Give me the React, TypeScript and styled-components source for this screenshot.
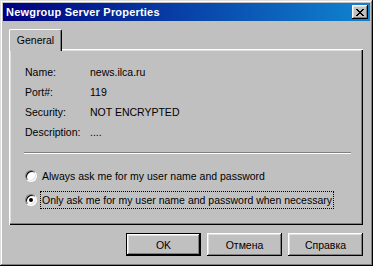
import React from "react";
import styled, { createGlobalStyle } from "styled-components";

const GlobalStyle = createGlobalStyle`
  html, body {
    margin: 0;
    padding: 0;
    background: #c0c0c0;
  }
  * {
    box-sizing: border-box;
  }
`;

const Window = styled.div`
  width: 373px;
  height: 266px;
  padding: 3px;
  display: flex;
  flex-direction: column;
  background: #c0c0c0;
  font-family: "Liberation Sans", Arial, sans-serif;
  font-size: 10.5px;
  color: #000;
  box-shadow: inset -1px -1px #000, inset 1px 1px #dfdfdf,
    inset -2px -2px #808080, inset 2px 2px #fff;
`;

const TitleBar = styled.div`
  height: 18px;
  display: flex;
  align-items: center;
  justify-content: space-between;
  padding: 0 2px 0 3px;
  background: linear-gradient(to right, #000080, #1084d0);
`;

const Title = styled.span`
  color: #fff;
  font-weight: bold;
  font-size: 11px;
  letter-spacing: 0.2px;
`;

const CloseButton = styled.button`
  width: 16px;
  height: 14px;
  padding: 0;
  border: none;
  background: #c0c0c0;
  display: flex;
  align-items: center;
  justify-content: center;
  box-shadow: inset -1px -1px #000, inset 1px 1px #fff,
    inset -2px -2px #808080, inset 2px 2px #dfdfdf;
`;

const Body = styled.div`
  flex: 1;
  display: flex;
  flex-direction: column;
  padding: 8px 7px 0 6px;
`;

const TabStrip = styled.div`
  display: flex;
  height: 20px;
`;

const Tab = styled.div<{ $active?: boolean }>`
  position: relative;
  z-index: 1;
  width: 53px;
  height: 22px;
  padding-bottom: 2px;
  display: flex;
  align-items: center;
  justify-content: center;
  background: #c0c0c0;
  border-left: 1px solid #fff;
  border-top: 1px solid #fff;
  border-right: 1px solid #000;
  border-top-left-radius: 2px;
  border-top-right-radius: 2px;
  box-shadow: inset -1px 0 #808080;
`;

const Panel = styled.div`
  height: 176px;
  padding: 13px 12px 0 16px;
  display: flex;
  flex-direction: column;
  box-shadow: inset 1px 1px #fff, inset -1px -1px #000,
    inset -2px -2px #808080, inset 2px 2px #dfdfdf;
`;

const InfoGrid = styled.div`
  display: grid;
  grid-template-columns: 65px auto;
  grid-auto-rows: 20px;
  align-items: center;
`;

const Separator = styled.div`
  margin: 10px 0 0 -1px;
  height: 2px;
  border-top: 1px solid #808080;
  border-bottom: 1px solid #fff;
`;

const RadioList = styled.div`
  margin-top: 12px;
  display: flex;
  flex-direction: column;
  gap: 4px;
`;

const RadioRow = styled.label`
  height: 20px;
  display: flex;
  align-items: center;
  gap: 4px;
`;

const RadioCircle = styled.span<{ $checked?: boolean }>`
  width: 12px;
  height: 12px;
  border-radius: 50%;
  background: #fff;
  border: 1px solid;
  border-color: #808080 #fff #fff #808080;
  box-shadow: inset 1px 1px #000, inset -1px -1px #dfdfdf;
  display: flex;
  align-items: center;
  justify-content: center;

  &::after {
    content: "";
    width: 4px;
    height: 4px;
    border-radius: 50%;
    background: ${(p) => (p.$checked ? "#000" : "transparent")};
  }
`;

const RadioText = styled.span<{ $focused?: boolean }>`
  padding: 1px 1px;
  line-height: 14px;
  outline: ${(p) => (p.$focused ? "1px dotted #000" : "none")};
`;

const ButtonRow = styled.div`
  margin-top: 8px;
  display: flex;
  justify-content: flex-end;
  gap: 6px;
`;

const Button = styled.button<{ $default?: boolean }>`
  width: 75px;
  height: 23px;
  padding: 0;
  border: none;
  background: #c0c0c0;
  font-family: "Liberation Sans", Arial, sans-serif;
  font-size: 10.5px;
  color: #000;
  box-shadow: ${(p) =>
    p.$default
      ? "inset 0 0 0 1px #000, inset -2px -2px #000, inset 2px 2px #fff, inset -3px -3px #808080, inset 3px 3px #dfdfdf"
      : "inset -1px -1px #000, inset 1px 1px #fff, inset -2px -2px #808080, inset 2px 2px #dfdfdf"};
`;

const CloseGlyph = () => (
  <svg width="8" height="7" viewBox="0 0 8 7" shapeRendering="crispEdges">
    <path
      d="M0 0h2v1h-2z M6 0h2v1h-2z M1 1h2v1h-2z M5 1h2v1h-2z M2 2h4v1h-4z M3 3h2v1h-2z M2 4h4v1h-4z M1 5h2v1h-2z M5 5h2v1h-2z M0 6h2v1h-2z M6 6h2v1h-2z"
      fill="#000"
    />
  </svg>
);

const info = [
  ["Name:", "news.ilca.ru"],
  ["Port#:", "119"],
  ["Security:", "NOT ENCRYPTED"],
  ["Description:", "...."],
];

export default function App() {
  return (
    <>
      <GlobalStyle />
      <Window>
        <TitleBar>
          <Title>Newgroup Server Properties</Title>
          <CloseButton>
            <CloseGlyph />
          </CloseButton>
        </TitleBar>
        <Body>
          <TabStrip>
            <Tab $active>General</Tab>
          </TabStrip>
          <Panel>
            <InfoGrid>
              {info.map(([k, v]) => (
                <React.Fragment key={k}>
                  <span>{k}</span>
                  <span>{v}</span>
                </React.Fragment>
              ))}
            </InfoGrid>
            <Separator />
            <RadioList>
              <RadioRow>
                <RadioCircle />
                <RadioText>Always ask me for my user name and password</RadioText>
              </RadioRow>
              <RadioRow>
                <RadioCircle $checked />
                <RadioText $focused>
                  Only ask me for my user name and password when necessary
                </RadioText>
              </RadioRow>
            </RadioList>
          </Panel>
          <ButtonRow>
            <Button $default>OK</Button>
            <Button>Отмена</Button>
            <Button>Справка</Button>
          </ButtonRow>
        </Body>
      </Window>
    </>
  );
}
